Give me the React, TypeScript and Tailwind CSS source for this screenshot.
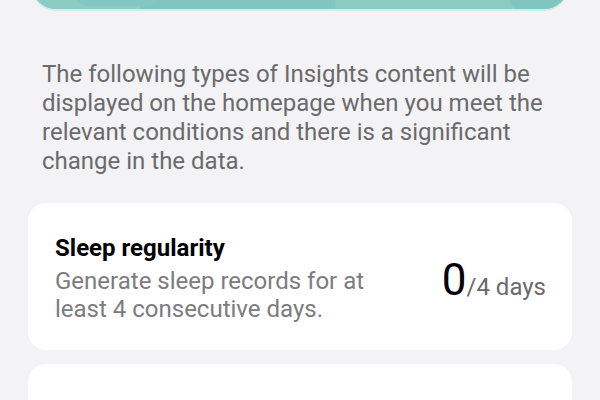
import React from "react";

export default function App() {
  return (
    <div
      className="w-[600px] h-[400px] overflow-hidden bg-[#f3f3f5]"
      style={{ fontFamily: "Roboto, 'Liberation Sans', sans-serif" }}
    >
      <div className="px-[32px]">
        <div className="-mt-[90px] h-[101px] rounded-b-[24px] bg-[#cdeef0] pb-[2px]">
          <div className="relative h-full overflow-hidden rounded-b-[24px] bg-[#86c8c2] flex">
            <div className="w-[108px] bg-[#8dcbc5]" />
            <div className="w-[195px] bg-[#81c4c0]" />
            <div className="flex-1 bg-[#8ccac4]" />
            <div className="absolute left-[40px] top-[60px] h-[36px] w-[90px] rounded-full bg-[#84c6c1]" />
            <div className="absolute right-[-20px] top-[50px] h-[60px] w-[80px] rounded-full bg-[#80c5c0]" />
          </div>
        </div>
      </div>

      <p className="mt-[49px] pl-[42px] pr-[30px] text-[24px] leading-[29px] text-[#6a6a6c]">
        The following types of Insights content will be displayed on the homepage when you meet the relevant
        conditions and there is a significant change in the data.
      </p>

      <div className="mt-[27px] px-[28px] flex flex-col gap-[14px]">
        <div className="h-[147px] rounded-[18px] bg-white pl-[27px] pr-[26px] flex items-center">
          <div className="flex-1 pt-[4px]">
            <div className="text-[24px] leading-[28px] font-bold text-black">Sleep regularity</div>
            <div className="mt-[5px] w-[330px] text-[24px] leading-[28px] text-[#7c7c7e]">
              Generate sleep records for at least 4 consecutive days.
            </div>
          </div>
          <div className="flex items-baseline pt-[6px]">
            <span className="text-[44px] leading-none text-black">0</span>
            <span className="text-[24px] leading-none text-[#6a6a6c]">/4 days</span>
          </div>
        </div>
        <div className="h-[147px] rounded-[18px] bg-white pl-[27px] pr-[26px] pt-[33px]">
          <div className="text-[24px] leading-[28px] font-bold text-black">Resting heart rate</div>
        </div>
      </div>
    </div>
  );
}
